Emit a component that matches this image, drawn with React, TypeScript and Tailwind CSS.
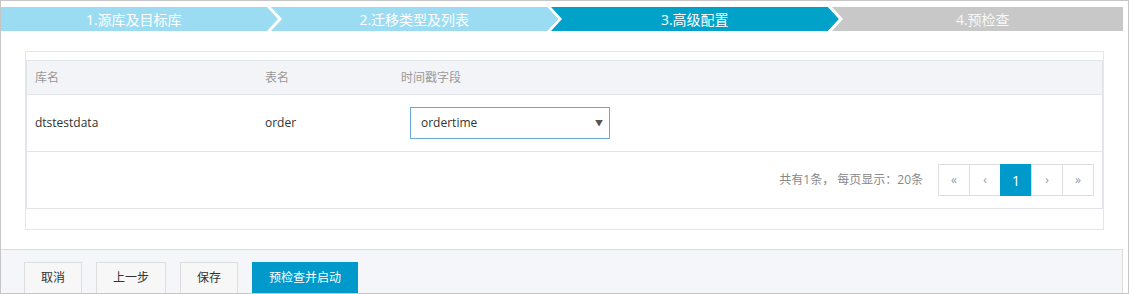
import React from 'react';

const steps = [
  { label: '1.源库及目标库', bg: '#9cdcf3', text: 'text-white' },
  { label: '2.迁移类型及列表', bg: '#9cdcf3', text: 'text-white' },
  { label: '3.高级配置', bg: '#00a2ca', text: 'text-white' },
  { label: '4.预检查', bg: '#c8c8c8', text: 'text-[#f7f7f7]' },
];

const Chevron: React.FC<{ from: string; to: string }> = ({ from, to }) => (
  <svg width="15" height="24" viewBox="0 0 15 24" className="block shrink-0">
    <rect x="0" y="0" width="15" height="24" fill={to} />
    <polygon points="0,0 11,12 0,24" fill={from} />
    <polygon points="0,0 4,0 15,12 4,24 0,24 11,12" fill="#ffffff" />
  </svg>
);

const StepBar: React.FC = () => (
  <div className="flex h-[24px]">
    {steps.map((s, i) => (
      <div key={i} className="flex flex-1" style={{ backgroundColor: s.bg }}>
        <div className={`flex-1 flex items-center justify-center text-[14px] ${s.text}`}>{s.label}</div>
        {i < steps.length - 1 && <Chevron from={s.bg} to={steps[i + 1].bg} />}
      </div>
    ))}
  </div>
);

const PageButton: React.FC<{ active?: boolean; children: React.ReactNode }> = ({ active, children }) => (
  <div
    className={`-ml-px first:ml-0 w-[32px] h-[32px] flex items-center justify-center border text-[12px] ${
      active ? 'bg-[#0099cc] border-[#0099cc] text-white text-[14px]' : 'bg-white border-[#dddddd] text-[#999999]'
    }`}
  >
    {children}
  </div>
);

const App: React.FC = () => {
  return (
    <div
      className="w-[1129px] h-[294px] border border-[#c6c6c6] overflow-hidden bg-white text-[#333333]"
      style={{ fontFamily: '"Open Sans", "Noto Sans CJK SC", sans-serif' }}
    >
      <div className="w-[1122px] h-full flex flex-col">
        <div className="pt-[6px]">
          <StepBar />
        </div>

        {/* table box */}
        <div className="ml-[24px] mr-[19px] mt-[20px] border border-[#e6e6e6] pt-[8px] pb-[20px]">
          <div className="border border-[#e1e4ea] text-[12px]">
            <div className="flex h-[34px] items-center bg-[#f3f4f8] text-[#999999] border-b border-[#e1e4ea]">
              <div className="w-[230px] pl-[8px]">库名</div>
              <div className="w-[136px] pl-[8px]">表名</div>
              <div className="flex-1 pl-[8px]">时间戳字段</div>
            </div>
            <div className="flex h-[57px] items-center border-b border-[#e1e4ea]">
              <div className="w-[230px] pl-[8px]">dtstestdata</div>
              <div className="w-[136px] pl-[8px]">order</div>
              <div className="flex-1 pl-[17px]">
                <div className="w-[200px] h-[32px] border border-[#68a9e2] flex items-center justify-between pl-[10px] pr-[6px] text-[#333333]">
                  <span>ordertime</span>
                  <span className="text-[8px] text-[#555555]">▼</span>
                </div>
              </div>
            </div>
            <div className="flex h-[56px] items-center justify-end pr-[8px]">
              <span className="text-[#888888] mr-[15px]">共有1条， 每页显示：20条</span>
              <div className="flex">
                <PageButton>«</PageButton>
                <PageButton>‹</PageButton>
                <PageButton active>1</PageButton>
                <PageButton>›</PageButton>
                <PageButton>»</PageButton>
              </div>
            </div>
          </div>
        </div>

        {/* footer */}
        <div className="mt-[19px] flex-1 border-t border-r border-[#dcdcdc] bg-[#f5f6fa] pt-[12px] pl-[23px]">
          <div className="flex gap-[14px] text-[12px]">
            <button className="h-[32px] px-4 border border-[#dddddd] bg-[#f7f7f7] text-[#333333]">取消</button>
            <button className="h-[32px] px-4 border border-[#dddddd] bg-[#f7f7f7] text-[#333333]">上一步</button>
            <button className="h-[32px] px-4 border border-[#dddddd] bg-[#f7f7f7] text-[#333333]">保存</button>
            <button className="h-[32px] px-4 border border-[#0099cc] bg-[#0099cc] text-white">预检查并启动</button>
          </div>
        </div>
      </div>
    </div>
  );
};

export default App;
